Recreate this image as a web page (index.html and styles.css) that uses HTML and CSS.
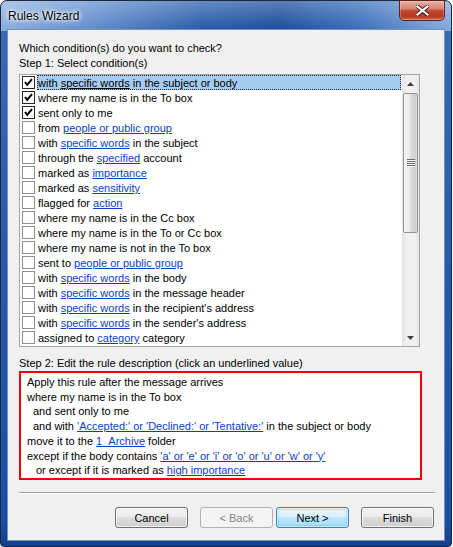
FILE: index.html
```html
<!DOCTYPE html>
<html>
<head>
<meta charset="utf-8">
<title>Rules Wizard</title>
<link rel="stylesheet" href="styles.css">
</head>
<body>
<div class="window">
  <div class="titlebar">
    <div class="title">Rules Wizard</div>
    <div class="close">
      <svg width="13" height="11" viewBox="0 0 13 11"><path d="M1.5 1.5 L11.5 9.5 M11.5 1.5 L1.5 9.5" stroke="#3b1a17" stroke-width="4" stroke-linecap="square"/><path d="M1.5 1.5 L11.5 9.5 M11.5 1.5 L1.5 9.5" stroke="#fff" stroke-width="2.2" stroke-linecap="square"/></svg>
    </div>
  </div>
  <div class="client">
    <div class="prompt">Which condition(s) do you want to check?</div>
    <div class="prompt">Step 1: Select condition(s)</div>
    <div class="list">
      <div class="rows">
        <div class="row sel"><span class="cb on"><svg width="11" height="11" viewBox="0 0 11 11"><path d="M2 5 L4.2 7.8 L9 2.2" fill="none" stroke="#000" stroke-width="2"/></svg></span><span class="label">with <span class="link">specific words</span> in the subject or body</span></div>
        <div class="row"><span class="cb on"><svg width="11" height="11" viewBox="0 0 11 11"><path d="M2 5 L4.2 7.8 L9 2.2" fill="none" stroke="#000" stroke-width="2"/></svg></span><span class="label">where my name is in the To box</span></div>
        <div class="row"><span class="cb on"><svg width="11" height="11" viewBox="0 0 11 11"><path d="M2 5 L4.2 7.8 L9 2.2" fill="none" stroke="#000" stroke-width="2"/></svg></span><span class="label">sent only to me</span></div>
        <div class="row"><span class="cb"></span><span class="label">from <span class="link">people or public group</span></span></div>
        <div class="row"><span class="cb"></span><span class="label">with <span class="link">specific words</span> in the subject</span></div>
        <div class="row"><span class="cb"></span><span class="label">through the <span class="link">specified</span> account</span></div>
        <div class="row"><span class="cb"></span><span class="label">marked as <span class="link">importance</span></span></div>
        <div class="row"><span class="cb"></span><span class="label">marked as <span class="link">sensitivity</span></span></div>
        <div class="row"><span class="cb"></span><span class="label">flagged for <span class="link">action</span></span></div>
        <div class="row"><span class="cb"></span><span class="label">where my name is in the Cc box</span></div>
        <div class="row"><span class="cb"></span><span class="label">where my name is in the To or Cc box</span></div>
        <div class="row"><span class="cb"></span><span class="label">where my name is not in the To box</span></div>
        <div class="row"><span class="cb"></span><span class="label">sent to <span class="link">people or public group</span></span></div>
        <div class="row"><span class="cb"></span><span class="label">with <span class="link">specific words</span> in the body</span></div>
        <div class="row"><span class="cb"></span><span class="label">with <span class="link">specific words</span> in the message header</span></div>
        <div class="row"><span class="cb"></span><span class="label">with <span class="link">specific words</span> in the recipient's address</span></div>
        <div class="row"><span class="cb"></span><span class="label">with <span class="link">specific words</span> in the sender's address</span></div>
        <div class="row"><span class="cb"></span><span class="label">assigned to <span class="link">category</span> category</span></div>
      </div>
      <div class="vscroll">
        <div class="sb-btn"><svg width="7" height="4" viewBox="0 0 7 4"><path d="M3.5 0 L7 4 L0 4 Z" fill="#404040"/></svg></div>
        <div class="thumb"><svg width="8" height="8" viewBox="0 0 8 8"><path d="M0 0.5 H8 M0 2.5 H8 M0 4.5 H8 M0 6.5 H8" stroke="#6a6a6a" stroke-width="1"/><path d="M1 1.5 H8 M1 3.5 H8 M1 5.5 H8 M1 7.5 H8" stroke="#fafafa" stroke-width="1"/></svg></div>
        <div class="spacer"></div>
        <div class="sb-btn"><svg width="7" height="4" viewBox="0 0 7 4"><path d="M0 0 L7 0 L3.5 4 Z" fill="#404040"/></svg></div>
      </div>
    </div>
    <div class="prompt step2">Step 2: Edit the rule description (click an underlined value)</div>
    <div class="desc">
      <div>Apply this rule after the message arrives</div>
      <div>where my name is in the To box</div>
      <div class="ind1">and sent only to me</div>
      <div class="ind1">and with <span class="link">'Accepted:' or 'Declined:' or 'Tentative:'</span> in the subject or body</div>
      <div>move it to the <span class="link">1_Archive</span> folder</div>
      <div>except if the body contains <span class="link">'a' or 'e' or 'i' or 'o' or 'u' or 'w' or 'y'</span></div>
      <div class="ind2">or except if it is marked as <span class="link">high importance</span></div>
    </div>
    <div class="fill"></div>
    <div class="sep"></div>
    <div class="buttons">
      <button class="btn">Cancel</button>
      <button class="btn disabled gap-l">&lt; Back</button>
      <button class="btn default gap-s">Next &gt;</button>
      <button class="btn gap-l">Finish</button>
    </div>
  </div>
</div>
</body>
</html>
```
FILE: styles.css
```css
* { box-sizing: border-box; }
html, body { margin: 0; padding: 0; background: #ffffff; }
body {
  font-family: "Liberation Sans", Arial, sans-serif;
  font-size: 11px;
  color: #000;
}
.window {
  width: 452px;
  height: 547px;
  border: 1px solid #1c2840;
  border-radius: 7px 7px 4px 4px;
  padding: 0 6px 5px 6px;
  display: flex;
  flex-direction: column;
  background:
    linear-gradient(to bottom, rgba(255,255,255,0.28), rgba(255,255,255,0) 28px) 0 0 / 100% 30px no-repeat,
    linear-gradient(100deg, #8fb1e2 0%, #5f8bcc 22%, #2a5caa 45%, #1d4d9d 62%, #3b6fbb 80%, #86abdf 100%) 0 0 / 100% 30px no-repeat,
    linear-gradient(to bottom, #3a6cb9 0%, #2659ad 50%, #1a4fa8 95%, #143f8c 100%);
}
.titlebar {
  height: 28px;
  flex: none;
  display: flex;
  justify-content: space-between;
  align-items: flex-start;
}
.title {
  padding: 8px 0 0 1px;
  font-size: 12px;
  line-height: 14px;
  color: #000;
  text-shadow: 0 0 6px #fff, 0 0 4px #fff, 0 0 2px rgba(255,255,255,0.8);
}
.close {
  width: 46px;
  height: 21px;
  margin-top: -1px;
  border: 1px solid #5a221d;
  border-radius: 0 0 5px 5px;
  background: linear-gradient(to bottom, #eab0a3 0%, #d98574 40%, #c4462f 52%, #b83821 80%, #d0694c 100%);
  display: flex;
  align-items: center;
  justify-content: center;
  box-shadow: inset 0 0 0 1px rgba(255,255,255,0.25);
}
.client {
  flex: 1;
  border: 1px solid #7b90b2;
  background: #f0f0f0;
  display: flex;
  flex-direction: column;
  padding: 11px 0 12px 11px;
}
.prompt { line-height: 15px; white-space: nowrap; }
.list {
  width: 401px;
  height: 273px;
  flex: none;
  margin-top: 3px;
  border: 1px solid #a5a5a5;
  background: #fff;
  display: flex;
}
.rows { flex: 1; overflow: hidden; }
.row {
  height: 15px;
  display: flex;
  align-items: center;
  padding-left: 2px;
  white-space: nowrap;
}
.cb {
  width: 13px;
  height: 13px;
  flex: none;
  margin-right: 2px;
  border: 1px solid #8e8f8f;
  background: #fff;
  display: flex;
  align-items: center;
  justify-content: center;
}
.cb.on { border-color: #2a2a2a; }
.label {
  flex: 1;
  margin-right: 1px;
  height: 15px;
  padding-top: 1px;
  line-height: 12px;
  border: 1px solid transparent;
  overflow: hidden;
}
.sel .label {
  background: #a7ccf1;
  border: 1px dotted #222;
}
.link { color: #0b3ec6; text-decoration: underline; }
.sel .link { color: #000; }
.vscroll {
  width: 17px;
  flex: none;
  display: flex;
  flex-direction: column;
  background: linear-gradient(to right, #e2e2e2 0%, #efefef 25%, #f1f1f1 75%, #e4e4e4 100%);
}
.sb-btn {
  height: 17px;
  flex: none;
  display: flex;
  align-items: center;
  justify-content: center;
}
.thumb {
  height: 140px;
  flex: none;
  margin: 1px 1px 0 1px;
  border: 1px solid #939393;
  border-radius: 2px;
  background: linear-gradient(to right, #f4f4f4 0%, #ebebeb 40%, #dadada 55%, #cecece 90%, #e2e2e2 100%);
  display: flex;
  align-items: center;
  justify-content: center;
}
.spacer { flex: 1; }
.step2 { margin-top: 9px; }
.desc {
  width: 403px;
  height: 109px;
  flex: none;
  border: 2px solid #f40000;
  background: #fff;
  padding: 2px 0 0 6px;
  line-height: 14.7px;
  white-space: nowrap;
  overflow: hidden;
}
.ind1 { padding-left: 6px; }
.ind2 { padding-left: 9px; }
.fill { flex: 1; }
.sep {
  height: 2px;
  flex: none;
  margin-right: 9px;
  border-top: 1px solid #a0a0a0;
  border-bottom: 1px solid #ffffff;
}
.buttons {
  display: flex;
  justify-content: flex-end;
  margin-top: 13px;
  padding-right: 10px;
  flex: none;
}
.btn {
  width: 73px;
  height: 21px;
  margin: 0;
  padding: 0;
  border: 1px solid #707070;
  border-radius: 3px;
  background: linear-gradient(to bottom, #f2f2f2 0%, #ebebeb 50%, #dddddd 50%, #cfcfcf 100%);
  box-shadow: inset 0 0 0 1px rgba(255,255,255,0.7);
  font-family: "Liberation Sans", Arial, sans-serif;
  font-size: 11px;
  color: #000;
  display: flex;
  align-items: center;
  justify-content: center;
}
.btn.default {
  border-color: #3c7fb1;
  background: linear-gradient(to bottom, #eaf6fd 0%, #d9f0fc 50%, #bee6fd 50%, #a7d9f5 100%);
  box-shadow: inset 0 0 0 1px rgba(255,255,255,0.6), inset 0 0 0 2px rgba(72,201,255,0.35);
}
.btn.disabled {
  border-color: #adb2b5;
  background: #f4f4f4;
  box-shadow: none;
  color: #838383;
}
.gap-l { margin-left: 12px; }
.gap-s { margin-left: 3px; }
```
